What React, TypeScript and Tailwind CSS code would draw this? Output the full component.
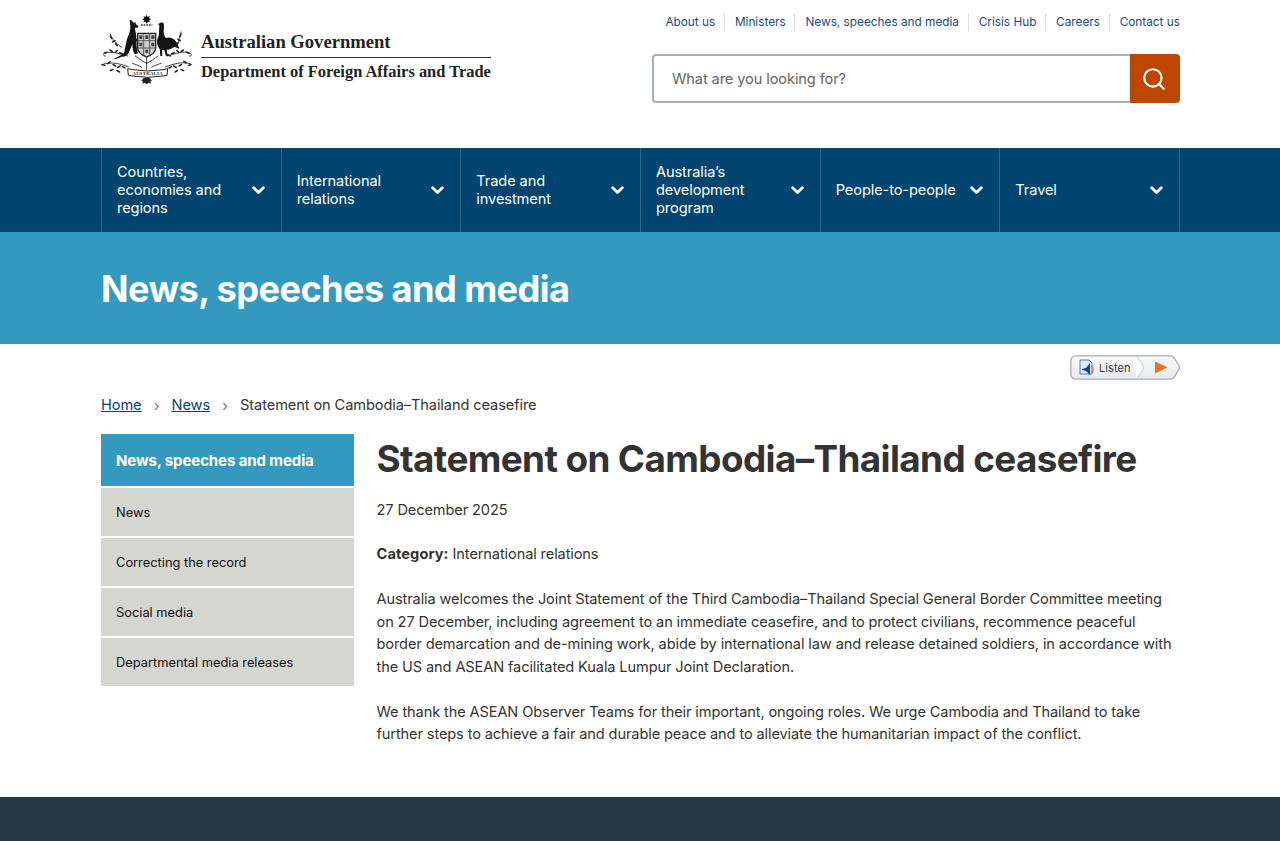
import React from "react";
import { Search } from "lucide-react";

const leaves: [number, number, number][] = [
  [32, 128, -20], [48, 122, 30], [64, 124, -40], [78, 130, 20], [90, 136, -30],
  [26, 165, 15], [42, 158, -35], [58, 166, 30], [72, 170, -30], [86, 172, 25], [50, 180, -25], [70, 184, 30],
  [278, 128, 20], [262, 122, -30], [248, 124, 40], [234, 130, -20], [222, 136, 30],
  [284, 165, -15], [270, 156, 35], [256, 166, -30], [240, 170, 30], [226, 172, -25], [262, 180, 25], [244, 184, -30],
  [48, 82, 60], [56, 94, -30], [64, 104, 50], [256, 76, -60], [252, 90, 30], [246, 102, -50],
];

function Crest() {
  return (
    <svg viewBox="0 0 315 240" className="w-[105px] h-[80px] shrink-0 ml-[-6px] mt-[-5px]" aria-hidden="true">
      <path d="M155 14l3 7 7-3-3 7 7 3-7 3 3 6-7-2-3 7-3-7-7 2 3-6-7-3 7-3-3-7 7 3z" fill="#111" />
      <path d="M138 45h34" stroke="#333" strokeWidth="4" strokeDasharray="5 3" />
      {/* kangaroo */}
      <path d="M108 30l8 8 5-1 2 6 8 6-3 4-8 0c0 11 5 20 4 33l5 4-4 3c-1 12 0 24 4 37l-10 3c-6-10-6-20-7-30l-5 12-8 18c-6 5-18 7-28 11-6 2-14 4-20 5 12-6 26-12 36-20 5-16 6-39 15-57 3-8 6-15 2-42z" fill="#151515" />
      {/* emu */}
      <path d="M190 42l9-5 7 3 1 9-1 16c1 8 3 15 7 19 13-5 26 2 33 15l7 17-13-5-7 2c-6 4-11 6-18 6l3 17h8l-13 3-5-19-7 0 1 18h-6l-2-22c-6-6-8-14-8-24 2-10 7-15 6-24l1-23-4-3z" fill="#151515" />
      {/* shield */}
      <path d="M128 70h54v44c0 14-14 22-27 27-13-5-27-13-27-27z" fill="#cfcfcf" stroke="#222" strokeWidth="4" />
      <path d="M146 70v66M164 70v66M128 92h54M128 114h54" stroke="#444" strokeWidth="2.500" />
      <path d="M133 76h9v11h-9zM151 76h9v11h-9zM169 76h9v11h-9zM133 98h9v11h-9zM169 98h9v11h-9zM151 119h9v10h-9z" fill="#444" />
      <g fill="none" stroke="#1c1c1c" strokeWidth="2.500" strokeLinecap="round">
        <path d="M46 72c4 14 16 28 34 40M258 66c-2 16-8 30-12 44" />
        <path d="M98 138c-22-6-50-16-70-8-5 4-2 9 4 8M216 138c24-6 50-18 70-8 6 4 3 10-3 8" />
        <path d="M100 170c-20-6-48-18-80-6M212 170c22-6 46-18 76-8" />
        <path d="M155 140v40M155 160c-10-4-22-14-34-22M155 160c10-4 22-14 34-22M140 172c-8-6-18-8-28-12M170 172c8-6 18-8 28-12" />
      </g>
      <g fill="#222">
        {leaves.map(([x, y, r]) => (
          <ellipse key={`${x}-${y}`} cx={x} cy={y} rx="7" ry="2.600" transform={`rotate(${r} ${x} ${y})`} />
        ))}
      </g>
      <path d="M98 176l14 3 46 4 46-4 14-3-2 20-12 2-46 4-46-4-12-2z" fill="#fff" stroke="#222" strokeWidth="3" />
      <text x="158" y="195" textAnchor="middle" fontSize="14" fontWeight="700" fontFamily="Liberation Serif, serif" fill="#222" letterSpacing="1">AUSTRALIA</text>
      <path d="M145 205l10-3 10 3 6 8-5 1 2 7-7-3-6 5-6-5-7 3 2-7-5-1z" fill="#222" />
    </svg>
  );
}

function ListenButton() {
  return (
    <svg viewBox="0 0 110 25" className="w-[110px] h-[25px] block" role="img" aria-label="Listen">
      <defs>
        <linearGradient id="listenBg" x1="0" y1="0" x2="0" y2="1">
          <stop offset="0" stopColor="#f8f9fa" />
          <stop offset="1" stopColor="#e6e9ec" />
        </linearGradient>
      </defs>
      <path d="M6 .8h94c2 0 3.200.8 4.200 2.200l5 8c.6 1 .6 2 0 3l-5 8c-1 1.400-2.200 2.200-4.200 2.200H6C3 24.200.8 22 .8 19V6C.8 3 3 .8 6 .8z" fill="url(#listenBg)" stroke="#a9aeb3" strokeWidth="1.300" />
      <path d="M66 1l5 6c3 4 3 7 0 11l-5 6" fill="#fff" stroke="#c3c7cb" />
      <path d="M10 5h9l3 3v11H10z" fill="#dfe8f5" stroke="#5a7cb8" />
      <path d="M12 14l4-1 4-5v12l-4-4-4-1z" fill="#123f9c" />
      <path d="M21.500 11c2 2 2 5 0 7" fill="none" stroke="#e0613a" strokeWidth="1.300" />
      <text x="29" y="16.500" fontSize="11" fontFamily="Inter, sans-serif" fill="#3a3f44" letterSpacing=".1">Listen</text>
      <path d="M85 6.500l12.500 6-12.500 6z" fill="#e8731a" />
    </svg>
  );
}

function Chevron() {
  return (
    <svg viewBox="0 0 13 9" className="w-[13px] h-[9px] shrink-0" aria-hidden="true">
      <path d="M1.700 1.700L6.500 6.500L11.300 1.700" fill="none" stroke="#fff" strokeWidth="2.800" strokeLinecap="round" strokeLinejoin="round" />
    </svg>
  );
}

const topLinks = ["About us", "Ministers", "News, speeches and media", "Crisis Hub", "Careers", "Contact us"];
const navItems = [
  "Countries, economies and regions",
  "International relations",
  "Trade and investment",
  "Australia’s development program",
  "People-to-people",
  "Travel",
];
const sideItems = ["News", "Correcting the record", "Social media", "Departmental media releases"];

export default function App() {
  return (
    <div className="h-[841px] overflow-hidden flex flex-col bg-white text-[#333] font-['Inter',sans-serif]">
      <header className="h-[148px] shrink-0 px-[100px] flex justify-between">
        <div className="flex pl-[1px] pt-[15px] h-fit">
          <Crest />
          <div className="ml-[1px] w-[290px] pt-[12px] font-['Liberation_Serif',serif] font-bold text-[#222]">
            <div className="text-[18.600px] leading-[30px] h-[30px] whitespace-nowrap">Australian Government</div>
            <div className="border-t border-[#333] text-[16.450px] leading-[28px] whitespace-nowrap">Department of Foreign Affairs and Trade</div>
          </div>
        </div>
        <div className="w-[528px] flex flex-col items-stretch">
          <nav className="flex justify-end pt-[13px] h-[54px]">
            {topLinks.map((l, i) => (
              <a key={l} className={`h-[18px] leading-[18px] text-[11.800px] text-[#1b4a85] whitespace-nowrap pl-[10px] ${i < 5 ? "pr-[8.700px] border-r border-[#ddd]" : ""}`}>{l}</a>
            ))}
          </nav>
          <div className="flex h-[49px]">
            <div className="flex-1 border-2 border-r-0 border-[#a8b1bb] rounded-l-[4px] flex items-center pl-[18px] pt-[2px] text-[14.600px] tracking-[-0.1px] text-[#626569]">What are you looking for?</div>
            <button className="w-[50px] bg-[#bd4700] rounded-r-[4px] flex items-center justify-center">
              <Search size={26} color="#fff" strokeWidth={2} className="mr-[2px]" />
            </button>
          </div>
        </div>
      </header>

      <nav className="h-[84px] shrink-0 bg-[#00446f] pl-[101px] pr-[100px] flex">
        {navItems.map((n, i) => (
          <div key={n} className={`flex-1 border-l border-[#2a6488] ${i === 5 ? "border-r" : ""} flex items-center justify-between pl-[15px] pr-[16px] text-white text-[14.600px] tracking-[-0.1px] leading-[18px]`}>
            <span className={i === 4 ? "whitespace-nowrap" : "w-[120px]"}>{n}</span>
            <Chevron />
          </div>
        ))}
      </nav>

      <div className="h-[112px] shrink-0 bg-[#3399bf] px-[101px] pt-[1px] flex items-center">
        <h2 className="text-[36.200px] tracking-[-0.6px] leading-[48px] font-bold text-white whitespace-nowrap">News, speeches and media</h2>
      </div>

      <div className="flex-1 px-[100px] flex flex-col">
        <div className="flex justify-end pt-[11px] h-[46px]"><ListenButton /></div>
        <div className="flex items-center h-[28px] pl-[1px] pt-[4px] text-[14.600px] tracking-[-0.1px] text-[#333]">
          <a className="underline text-[#0a3d82]">Home</a>
          <span className="mx-[12.200px] text-[#777] text-[15px]">›</span>
          <a className="underline text-[#0a3d82]">News</a>
          <span className="mx-[12.200px] text-[#777] text-[15px]">›</span>
          <span>Statement on Cambodia–Thailand ceasefire</span>
        </div>

        <div className="flex pl-[1px] pt-[16px]">
          <aside className="w-[253px] shrink-0 flex flex-col">
            <div className="h-[52px] pt-[2px] bg-[#3399bf] flex items-center pl-[15px] text-white font-bold text-[15px] tracking-[-0.1px]">News, speeches and media</div>
            {sideItems.map((s) => (
              <div key={s} className="mt-[2px] h-[48px] pt-[1px] bg-[#d5d6d0] flex items-center pl-[15px] text-[12.850px] text-[#111]">{s}</div>
            ))}
          </aside>
          <main className="ml-[22.500px] flex-1 text-[14.600px] tracking-[-0.12px] leading-[22.500px] text-[#333]">
            <h1 className="mt-[1px] text-[36.850px] tracking-[-0.6px] leading-[48px] font-bold text-[#333] whitespace-nowrap">Statement on Cambodia–Thailand ceasefire</h1>
            <p className="mt-[16px]">27 December 2025</p>
            <p className="mt-[21.500px]"><strong className="font-bold tracking-[0.1px]">Category:</strong> International relations</p>
            <p className="mt-[22.500px]">Australia welcomes the Joint Statement of the Third Cambodia–Thailand Special General Border Committee meeting on 27 December, including agreement to an immediate ceasefire, and to protect civilians, recommence peaceful border demarcation and de-mining work, abide by international law and release detained soldiers, in accordance with the US and ASEAN facilitated Kuala Lumpur Joint Declaration.</p>
            <p className="mt-[22.500px]">We thank the ASEAN Observer Teams for their important, ongoing roles. We urge Cambodia and Thailand to take further steps to achieve a fair and durable peace and to alleviate the humanitarian impact of the conflict.</p>
          </main>
        </div>
      </div>

      <footer className="h-[44px] shrink-0 bg-[#263746]" />
    </div>
  );
}
